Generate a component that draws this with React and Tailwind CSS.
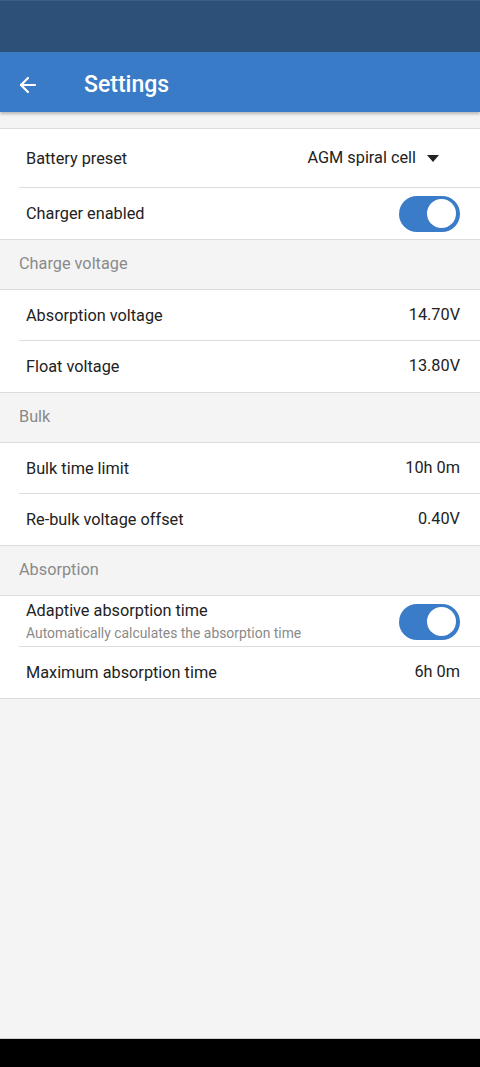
import { ArrowLeft } from 'lucide-react';

function Toggle() {
    return (
        <div className="w-[61px] h-[36px] rounded-full bg-[#3b7cc9] flex items-center justify-end pr-[4px]">
            <div className="w-[29px] h-[29px] rounded-full bg-white"></div>
        </div>
    );
}

function Row({ label, value, sub, toggle, dropdown, divider = true, h = 'h-[51px]' }) {
    return (
        <div className={`relative flex items-center justify-between pl-[26px] pr-[20px] ${h}`}>
            <div className="flex flex-col">
                <span className="text-[16.3px] text-[#222] leading-[20px]">{label}</span>
                {sub && <span className="text-[13.9px] text-[#8a8a8a] leading-[18px] mt-[3px]">{sub}</span>}
            </div>
            {toggle && <Toggle />}
            {value && (
                <span className="flex items-center text-[16.3px] text-[#222]">
                    {value}
                    {dropdown && (
                        <svg width="12" height="7" viewBox="0 0 12 7" className="ml-[11px] mr-[21px]">
                            <path d="M0 0h12L6 7z" fill="#222" />
                        </svg>
                    )}
                </span>
            )}
            {divider && <div className="absolute left-[19px] right-0 bottom-0 h-px bg-[#dcdcdc]"></div>}
        </div>
    );
}

function Section({ title, children }) {
    return (
        <div>
            <div className="h-[50px] flex items-center pl-[19px] text-[16.3px] text-[#8a8a8a] bg-[#f4f4f4] border-b border-[#dcdcdc]">
                {title}
            </div>
            <div className="bg-white border-b border-[#dcdcdc]">{children}</div>
        </div>
    );
}

export default function App() {
    return (
        <div className="w-[480px] h-[1067px] flex flex-col bg-[#f4f4f4] overflow-hidden" style={{ fontFamily: 'Roboto, "Noto Sans", sans-serif' }}>
            <div className="h-[52px] bg-[#2d5079] border-t border-[#3a5e88]"></div>
            <div className="h-[60px] pt-[6px] bg-[#3a7bc8] flex items-center shadow-[0_2px_3px_rgba(0,0,0,0.25)] relative z-10">
                <ArrowLeft className="ml-[16px] text-white" size={24} strokeWidth={2.2} />
                <span className="ml-[44px] text-[23px] text-white font-medium">Settings</span>
            </div>

            <div className="flex-1 pt-[16px]">
                <div className="bg-white border-t border-b border-[#dcdcdc]">
                    <Row label="Battery preset" value="AGM spiral cell" dropdown h="h-[59px]" />
                    <Row label="Charger enabled" toggle divider={false} />
                </div>
                <Section title="Charge voltage">
                    <Row label="Absorption voltage" value="14.70V" />
                    <Row label="Float voltage" value="13.80V" divider={false} />
                </Section>
                <Section title="Bulk">
                    <Row label="Bulk time limit" value="10h 0m" />
                    <Row label="Re-bulk voltage offset" value="0.40V" divider={false} />
                </Section>
                <Section title="Absorption">
                    <Row label="Adaptive absorption time" sub="Automatically calculates the absorption time" toggle />
                    <Row label="Maximum absorption time" value="6h 0m" divider={false} />
                </Section>
            </div>

            <div className="h-[29px] bg-black border-t border-[#cfcfcf]"></div>
        </div>
    );
}
